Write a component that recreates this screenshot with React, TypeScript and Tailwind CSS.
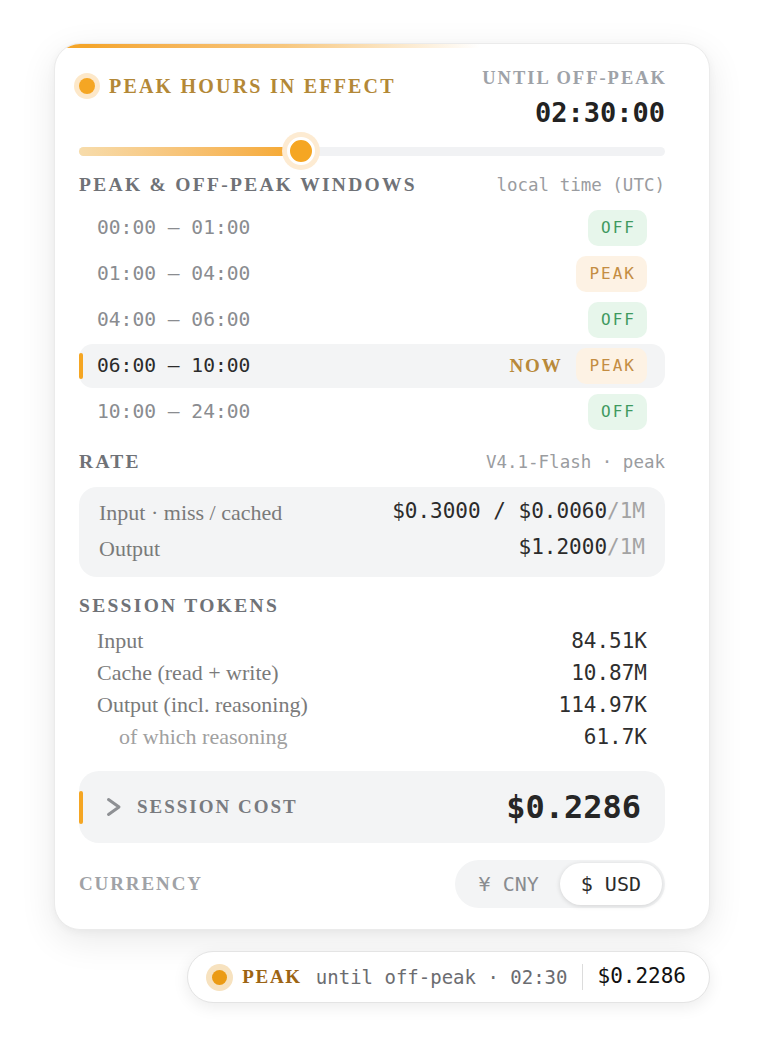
import React from "react";

const SERIF = "font-['Liberation_Serif',serif]";
const MONO = "font-['DejaVu_Sans_Mono',monospace]";

type Row = { t: string; kind: "off" | "peak"; now?: boolean };

const rows: Row[] = [
  { t: "00:00 – 01:00", kind: "off" },
  { t: "01:00 – 04:00", kind: "peak" },
  { t: "04:00 – 06:00", kind: "off" },
  { t: "06:00 – 10:00", kind: "peak", now: true },
  { t: "10:00 – 24:00", kind: "off" },
];

function Badge({ kind }: { kind: "off" | "peak" }) {
  if (kind === "off") {
    return (
      <span className="flex h-[36px] items-center rounded-[10px] bg-[#e7f6eb] pl-[13px] pr-[11px] font-['DejaVu_Sans_Mono',monospace] text-[16px] tracking-[2px] text-[#3f9a5f]">
        OFF
      </span>
    );
  }
  return (
    <span className="flex h-[36px] items-center rounded-[10px] bg-[#fdf2e4] pl-[13px] pr-[11px] font-['DejaVu_Sans_Mono',monospace] text-[16px] tracking-[2px] text-[#c48d42]">
      PEAK
    </span>
  );
}

function WindowRow({ r }: { r: Row }) {
  return (
    <div
      className={`flex h-[44px] items-center rounded-[14px] pr-[18px] ${
        r.now ? "bg-[#f3f4f5]" : ""
      }`}
    >
      <span
        className={`h-[26px] w-[4px] rounded-full ${r.now ? "bg-[#f5a623]" : ""}`}
      />
      <span
        className={`ml-[14px] ${MONO} text-[19.6px] leading-[24px] ${
          r.now ? "text-[#2b2b2b]" : "text-[#8a8c90]"
        }`}
      >
        {r.t}
      </span>
      <span className="flex-1" />
      {r.now && (
        <span
          className={`mr-[14px] ${SERIF} text-[19px] font-bold tracking-[1.8px] text-[#b8893a]`}
        >
          NOW
        </span>
      )}
      <Badge kind={r.kind} />
    </div>
  );
}

function TokenRow({
  label,
  value,
  sub,
}: {
  label: string;
  value: string;
  sub?: boolean;
}) {
  return (
    <div className="flex h-[32px] items-center justify-between pl-[18px] pr-[18px]">
      <span
        className={`${SERIF} text-[22px] leading-[28px] ${
          sub ? "pl-[22px] text-[#a0a0a0]" : "text-[#7a7a7a]"
        }`}
      >
        {label}
      </span>
      <span className={`${MONO} text-[21px] leading-[26px] text-[#2e2e2e]`}>
        {value}
      </span>
    </div>
  );
}

function Heading({ children }: { children: React.ReactNode }) {
  return (
    <span
      className={`${SERIF} text-[19.5px] font-bold tracking-[2.3px] text-[#6f7277]`}
    >
      {children}
    </span>
  );
}

function Card() {
  return (
    <div className="w-[656px] overflow-hidden rounded-[26px] border border-[#ebebeb] bg-white shadow-[0_10px_36px_rgba(0,0,0,0.09),0_2px_8px_rgba(0,0,0,0.04)]">
      <div className="h-[4px] w-full bg-gradient-to-r from-[#f4a52a] from-5% via-[#f7c77e] via-35% to-transparent to-65%" />
      <div className="pb-[21px] pl-[24px] pr-[44px]">
        {/* Header */}
        <div className="flex items-start justify-between pt-[20px]">
          <div className="mt-[6px] flex h-[24px] items-center">
            <span className="h-4 w-4 rounded-full bg-[#f5a623] shadow-[0_0_0_5px_#fde8c9]" />
            <span
              className={`ml-[14px] ${SERIF} text-[20px] font-bold leading-[24px] tracking-[2.2px] text-[#b38837]`}
            >
              PEAK HOURS IN EFFECT
            </span>
          </div>
          <div className="flex flex-col items-end">
            <span
              className={`mr-[-2px] ${SERIF} text-[18.5px] font-bold leading-[20px] tracking-[2px] text-[#9ea2a8]`}
            >
              UNTIL OFF-PEAK
            </span>
            <span
              className={`mt-[9px] ${MONO} text-[27px] font-bold leading-[32px] text-[#222222]`}
            >
              02:30:00
            </span>
          </div>
        </div>

        {/* Slider */}
        <div className="relative mt-[10px] flex h-[24px] items-center">
          <div className="h-[9px] w-full rounded-full bg-[#f1f2f4]">
            <div className="h-full w-[37.9%] rounded-full bg-gradient-to-r from-[#f7dcab] to-[#f5a623]" />
          </div>
          <span className="absolute left-[37.9%] top-1/2 h-[28px] w-[28px] -translate-x-1/2 -translate-y-1/2 rounded-full border-[3px] border-white bg-[#f5a623] shadow-[0_0_0_5px_#fdebd2]" />
        </div>

        {/* Windows heading */}
        <div className="mt-[12px] flex h-[20px] items-center justify-between">
          <Heading>PEAK &amp; OFF-PEAK WINDOWS</Heading>
          <span className={`${MONO} text-[17.5px] text-[#9a9ca0]`}>
            local time (UTC)
          </span>
        </div>

        <div className="mt-[11px] flex flex-col gap-[2px]">
          {rows.map((r) => (
            <WindowRow key={r.t} r={r} />
          ))}
        </div>

        {/* Rate */}
        <div className="mt-[18px] flex h-[20px] items-center justify-between">
          <Heading>RATE</Heading>
          <span className={`${MONO} text-[17.5px] text-[#9a9ca0]`}>
            V4.1-Flash · peak
          </span>
        </div>

        <div className="mt-[15px] rounded-[18px] bg-[#f3f4f5] pb-[11px] pl-[20px] pr-[20px] pt-[7px]">
          <div className="flex h-[36px] items-center justify-between">
            <span className={`${SERIF} text-[22px] text-[#7a7a7a]`}>
              Input · miss / cached
            </span>
            <span className={`${MONO} text-[21px] text-[#2b2b2b]`}>
              $0.3000 / $0.0060<span className="text-[#a3a3a3]">/1M</span>
            </span>
          </div>
          <div className="flex h-[36px] items-center justify-between">
            <span className={`${SERIF} text-[22px] text-[#7a7a7a]`}>Output</span>
            <span className={`${MONO} text-[21px] text-[#2b2b2b]`}>
              $1.2000<span className="text-[#a3a3a3]">/1M</span>
            </span>
          </div>
        </div>

        {/* Session tokens */}
        <div className="mt-[19px] flex h-[20px] items-center">
          <Heading>SESSION TOKENS</Heading>
        </div>
        <div className="mt-[9px] flex flex-col">
          <TokenRow label="Input" value="84.51K" />
          <TokenRow label="Cache (read + write)" value="10.87M" />
          <TokenRow label="Output (incl. reasoning)" value="114.97K" />
          <TokenRow label="of which reasoning" value="61.7K" sub />
        </div>

        {/* Session cost */}
        <div className="mt-[18px] flex h-[72px] items-center rounded-[20px] bg-[#f3f4f5] pr-[24px]">
          <span className="h-[33px] w-[4px] rounded-full bg-[#f5a623]" />
          <svg
            className="ml-[23px]"
            width="16"
            height="20"
            viewBox="0 0 16 20"
            fill="none"
          >
            <path
              d="M2.5 2.5 L13 10 L2.5 17.5"
              stroke="#8e9094"
              strokeWidth="3"
              strokeLinecap="round"
              strokeLinejoin="round"
            />
          </svg>
          <span
            className={`ml-[15px] ${SERIF} text-[19px] font-bold tracking-[2px] text-[#797b80]`}
          >
            SESSION COST
          </span>
          <span className="flex-1" />
          <span
            className={`${MONO} text-[32px] font-bold leading-[40px] text-[#262626]`}
          >
            $0.2286
          </span>
        </div>

        {/* Currency */}
        <div className="mt-[17px] flex items-center justify-between">
          <span
            className={`${SERIF} text-[19px] font-bold tracking-[1.9px] text-[#a0a2a6]`}
          >
            CURRENCY
          </span>
          <div className="flex rounded-full bg-[#f3f4f5] p-[3px]">
            <span
              className={`flex h-[42px] items-center rounded-full px-[21px] ${MONO} text-[20px] text-[#8a8c90]`}
            >
              ¥ CNY
            </span>
            <span
              className={`flex h-[42px] items-center rounded-full bg-white px-[21px] shadow-[0_1px_5px_rgba(0,0,0,0.14)] ${MONO} text-[20px] text-[#2b2b2b]`}
            >
              $ USD
            </span>
          </div>
        </div>
      </div>
    </div>
  );
}

function Pill() {
  return (
    <div className="mt-[21px] flex h-[52px] items-center rounded-full border border-[#e4e4e4] bg-white pl-[24px] pr-[23px] shadow-[0_4px_16px_rgba(0,0,0,0.08)]">
      <span className="h-[15px] w-[15px] rounded-full bg-[#eb9b14] shadow-[0_0_0_6px_#f7e2bf]" />
      <span
        className={`ml-[15px] ${SERIF} text-[19px] font-bold tracking-[1.7px] text-[#9c6414]`}
      >
        PEAK
      </span>
      <span className={`ml-[14px] ${MONO} text-[19px] text-[#6b6c70]`}>
        until off-peak · 02:30
      </span>
      <span className="ml-[15px] h-[26px] w-px bg-[#dcdcdc]" />
      <span className={`ml-[14px] ${MONO} text-[21px] text-[#111111]`}>
        $0.2286
      </span>
    </div>
  );
}

export default function App() {
  return (
    <div className="min-h-[1062px] w-full bg-white">
      <div className="flex w-[710px] flex-col items-end pl-[54px] pt-[43px]">
        <Card />
        <Pill />
      </div>
    </div>
  );
}
